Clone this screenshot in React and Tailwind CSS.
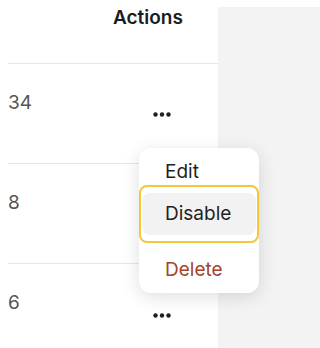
import React from "react";

const rows = ["34", "8", "6"];

function Dots() {
  return (
    <svg width="18" height="5" viewBox="0 0 18 5" className="text-[#1f1f1f]">
      <circle cx="2.5" cy="2.5" r="2.2" fill="currentColor" />
      <circle cx="9" cy="2.5" r="2.2" fill="currentColor" />
      <circle cx="15.5" cy="2.5" r="2.2" fill="currentColor" />
    </svg>
  );
}

export default function App() {
  return (
    <div
      className="relative w-full h-[348px] overflow-hidden bg-white flex"
      style={{ fontFamily: "Inter, 'Noto Sans', sans-serif" }}
    >
      {/* table */}
      <div className="w-[218px] shrink-0 pl-2 flex flex-col">
        {/* header row */}
        <div className="h-[64px] shrink-0 flex border-b border-[#e6e6e6]">
          <div className="w-[105px]" />
          <div className="pt-[4px] text-[19px] font-semibold text-[#1c1c1c]">Actions</div>
        </div>

        {rows.map((n, i) => (
          <div
            key={n}
            className={
              i < rows.length - 1
                ? "h-[100px] shrink-0 flex border-b border-[#e6e6e6]"
                : "h-[100px] shrink-0 flex"
            }
          >
            <div className="w-[105px] pt-[25px] text-[19px] text-[#555555]">{n}</div>
            <div className="flex-1 flex items-center pl-[40px] pt-[2px]">
              <Dots />
            </div>
          </div>
        ))}
      </div>

      {/* side panel */}
      <div className="flex-1 mt-[7px] bg-[#f3f3f3]" />

      {/* dropdown menu */}
      <div className="absolute left-[139px] top-[148px] w-[120px] h-[145px] rounded-[12px] bg-white shadow-[0_4px_18px_rgba(0,0,0,0.13)] flex flex-col text-[19px]">
        <div className="h-[37px] pt-[11px] pl-[26px] flex items-center text-[#1f1f1f]">Edit</div>
        <div className="h-[58px] rounded-[8px] border-2 border-[#f5c53a] px-[1px] py-[6px]">
          <div className="h-full rounded-[8px] bg-[#f2f2f2] pl-[23px] flex items-center text-[#1f1f1f]">
            Disable
          </div>
        </div>
        <div className="flex-1 pl-[26px] pt-[4px] flex items-center text-[#a2442b]">Delete</div>
      </div>
    </div>
  );
}
